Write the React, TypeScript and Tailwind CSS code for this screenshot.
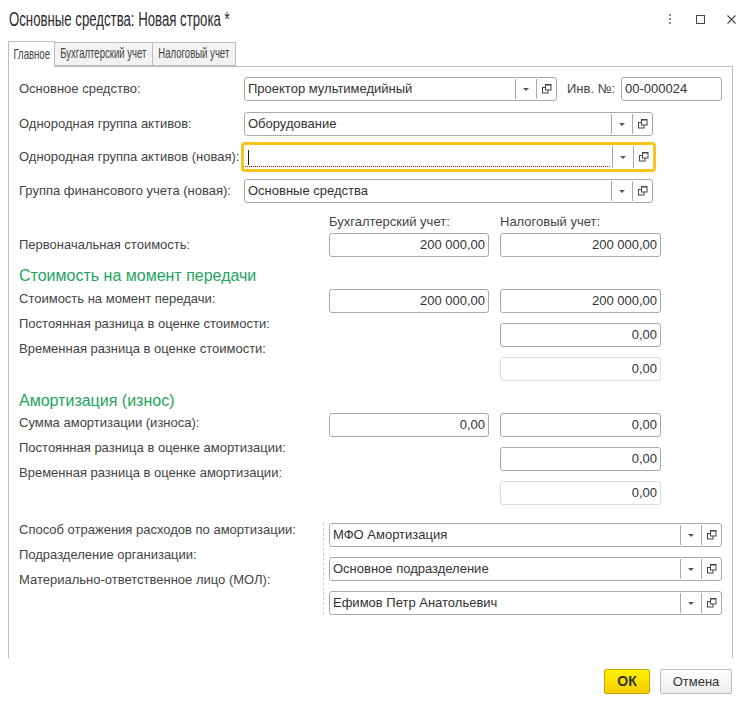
import React from 'react';

// 1C-style form: Основные средства: Новая строка
const sans = "font-['Liberation_Sans',Arial,sans-serif]";

const DropArrow = () => (
  <svg width="6" height="3" viewBox="0 0 6 3">
    <path d="M0 0 H6 L3 3 Z" fill="#555" />
  </svg>
);

const OpenIcon = () => (
  <svg width="10" height="10" viewBox="0 0 10 10">
    <rect x="0.5" y="3.5" width="5.5" height="5.5" fill="none" stroke="#444" />
    <rect x="3.5" y="0.5" width="5.5" height="5.5" fill="#fff" stroke="#444" />
    <path d="M3.5 1 H9" stroke="#444" />
  </svg>
);

interface LookupProps {
  value: string;
  className?: string;
  focused?: boolean;
}

const LookupField = ({ value, className = '', focused }: LookupProps) => (
  <div
    className={`flex h-[24px] bg-white ${
      focused
        ? 'outline-[3px] outline-solid outline-[#f7c51c] rounded-[1px]'
        : 'border border-[#a9a9a9] rounded-[3px]'
    } ${className}`}
  >
    <div className="relative flex-1 flex items-center pl-[3px] text-[13px] text-[#333] whitespace-nowrap overflow-hidden">
      {focused ? <span className="w-px h-[15px] bg-[#222] ml-[1px]" /> : value}
      {focused && (
        <div className="absolute left-[1px] right-[2px] bottom-[2px] border-b border-dotted border-[#d40000]" />
      )}
    </div>
    <div className="w-[21px] border-l border-[#a9a9a9] flex items-center justify-center my-[1px]">
      <DropArrow />
    </div>
    <div className="w-[20px] border-l border-[#a9a9a9] flex items-center justify-center my-[1px]">
      <OpenIcon />
    </div>
  </div>
);

const NumField = ({ value, disabled, className = '' }: { value: string; disabled?: boolean; className?: string }) => (
  <div
    className={`h-[24px] border rounded-[3px] flex items-center justify-end pr-[3px] text-[13px] text-[#333] bg-white ${
      disabled ? 'border-[#dcdcdc]' : 'border-[#a9a9a9]'
    } ${className}`}
  >
    {value}
  </div>
);

const Label = ({ children }: { children: React.ReactNode }) => (
  <div className="text-[13px] text-[#444] whitespace-nowrap">{children}</div>
);

const StackLabel = ({ children }: { children: React.ReactNode }) => (
  <div className="h-[25px] flex items-center text-[13px] text-[#444] whitespace-nowrap">{children}</div>
);

const Heading = ({ children }: { children: React.ReactNode }) => (
  <div className="h-[18px] flex items-center text-[16px] text-[#1da55c] whitespace-nowrap">{children}</div>
);

const Tab = ({ label, active, width }: { label: string; active?: boolean; width: string }) => (
  <div
    className={`flex items-center justify-center border-[#bdbdbd] whitespace-nowrap ${width} ${
      active
        ? 'relative z-10 h-[26px] bg-white border border-b-0 -mb-px'
        : 'h-[24px] bg-[#f2f2f2] border border-l-0'
    }`}
  >
    <span className="inline-block scale-x-[0.66]">{label}</span>
  </div>
);

export default function App() {
  return (
    <div className={`w-[736px] h-[702px] bg-white overflow-hidden ${sans}`}>
      {/* Title bar */}
      <div className="h-[38px] flex items-center pl-[9px]">
        <div className="flex-1 text-[20px] text-[#2b2b2b] whitespace-nowrap">
          <span className="inline-block origin-left scale-x-[0.66]">Основные средства: Новая строка *</span>
        </div>
        <div className="flex flex-col gap-[2px] mr-[25px]">
          <span className="w-[2px] h-[2px] bg-[#888]" />
          <span className="w-[2px] h-[2px] bg-[#888]" />
          <span className="w-[2px] h-[2px] bg-[#888]" />
        </div>
        <div className="w-[9px] h-[9px] border border-[#444] mr-[22px]" />
        <svg width="9" height="9" viewBox="0 0 9 9">
          <path d="M0.5 0.5 L8.5 8.5 M8.5 0.5 L0.5 8.5" stroke="#444" strokeWidth="1.1" />
        </svg>
      </div>

      {/* Tabs */}
      <div className="flex items-end h-[25px] mt-[3px] ml-[8px] text-[14.5px] text-[#444]">
        <Tab label="Главное" active width="w-[47px]" />
        <Tab label="Бухгалтерский учет" width="w-[98px]" />
        <Tab label="Налоговый учет" width="w-[83px]" />
      </div>

      {/* Panel */}
      <div className="mr-[3px] ml-[8px] h-[592px] border border-b-0 border-[#bdbdbd] pt-[10px] pl-[10px]">
        {/* Lookup rows */}
        <div className="flex items-center h-[24px]">
          <div className="w-[225px]"><Label>Основное средство:</Label></div>
          <LookupField value="Проектор мультимедийный" className="w-[313px]" />
          <div className="ml-[10px] w-[54px]"><Label>Инв. №:</Label></div>
          <div className="w-[101px] h-[24px] border border-[#a9a9a9] rounded-[3px] flex items-center pl-[3px] text-[13px] text-[#333]">
            00-000024
          </div>
        </div>
        <div className="flex items-center h-[24px] mt-[11px]">
          <div className="w-[225px]"><Label>Однородная группа активов:</Label></div>
          <LookupField value="Оборудование" className="w-[409px]" />
        </div>
        <div className="flex items-center h-[24px] mt-[9px]">
          <div className="w-[225px]"><Label>Однородная группа активов (новая):</Label></div>
          <LookupField value="" focused className="w-[409px]" />
        </div>
        <div className="flex items-center h-[24px] mt-[10px]">
          <div className="w-[225px]"><Label>Группа финансового учета (новая):</Label></div>
          <LookupField value="Основные средства" className="w-[409px]" />
        </div>

        {/* Column headers */}
        <div className="flex h-[16px] mt-[11px] items-center text-[13px] text-[#444]">
          <div className="w-[310px]" />
          <div className="w-[171px]">Бухгалтерский учет:</div>
          <div>Налоговый учет:</div>
        </div>
        <div className="flex items-center h-[24px] mt-[3px]">
          <div className="w-[310px]"><Label>Первоначальная стоимость:</Label></div>
          <NumField value="200 000,00" className="w-[160px]" />
          <NumField value="200 000,00" className="w-[161px] ml-[11px]" />
        </div>

        {/* Стоимость на момент передачи */}
        <div className="mt-[10px]">
          <Heading>Стоимость на момент передачи</Heading>
        </div>
        <div className="flex mt-[1px]">
          <div className="w-[310px] flex flex-col">
            <StackLabel>Стоимость на момент передачи:</StackLabel>
            <StackLabel>Постоянная разница в оценке стоимости:</StackLabel>
            <StackLabel>Временная разница в оценке стоимости:</StackLabel>
          </div>
          <div className="pt-[3px] flex flex-col gap-[10px]">
            <div className="flex gap-[11px]">
              <NumField value="200 000,00" className="w-[160px]" />
              <NumField value="200 000,00" className="w-[161px]" />
            </div>
            <NumField value="0,00" className="w-[161px] ml-[171px]" />
            <NumField value="0,00" disabled className="w-[161px] ml-[171px]" />
          </div>
        </div>

        {/* Амортизация */}
        <div className="mt-[11px]">
          <Heading>Амортизация (износ)</Heading>
        </div>
        <div className="flex">
          <div className="w-[310px] flex flex-col">
            <StackLabel>Сумма амортизации (износа):</StackLabel>
            <StackLabel>Постоянная разница в оценке амортизации:</StackLabel>
            <StackLabel>Временная разница в оценке амортизации:</StackLabel>
          </div>
          <div className="pt-[3px] flex flex-col gap-[10px]">
            <div className="flex gap-[11px]">
              <NumField value="0,00" className="w-[160px]" />
              <NumField value="0,00" className="w-[161px]" />
            </div>
            <NumField value="0,00" className="w-[161px] ml-[171px]" />
            <NumField value="0,00" disabled className="w-[161px] ml-[171px]" />
          </div>
        </div>

        {/* Bottom group */}
        <div className="flex mt-[12px]">
          <div className="w-[304px] flex flex-col">
            <StackLabel>Способ отражения расходов по амортизации:</StackLabel>
            <StackLabel>Подразделение организации:</StackLabel>
            <StackLabel>Материально-ответственное лицо (МОЛ):</StackLabel>
          </div>
          <div className="mt-[6px] border-l border-dashed border-[#cfcfcf] pl-[5px] flex flex-col gap-[10px]">
            <LookupField value="МФО Амортизация" className="w-[393px]" />
            <LookupField value="Основное подразделение" className="w-[393px]" />
            <LookupField value="Ефимов Петр Анатольевич" className="w-[393px]" />
          </div>
        </div>
      </div>

      {/* Buttons */}
      <div className="flex justify-end gap-[10px] mt-[11px] pr-[4px] text-[13px]">
        <button className="w-[46px] h-[25px] rounded-[2px] border border-[#c9a900] bg-gradient-to-b from-[#fff200] to-[#f3cc00] font-bold text-[14px] text-[#333]">
          ОК
        </button>
        <button className="w-[72px] h-[25px] rounded-[2px] border border-[#bcbcbc] bg-gradient-to-b from-[#ffffff] to-[#ececec] text-[#333]">
          Отмена
        </button>
      </div>
    </div>
  );
}
